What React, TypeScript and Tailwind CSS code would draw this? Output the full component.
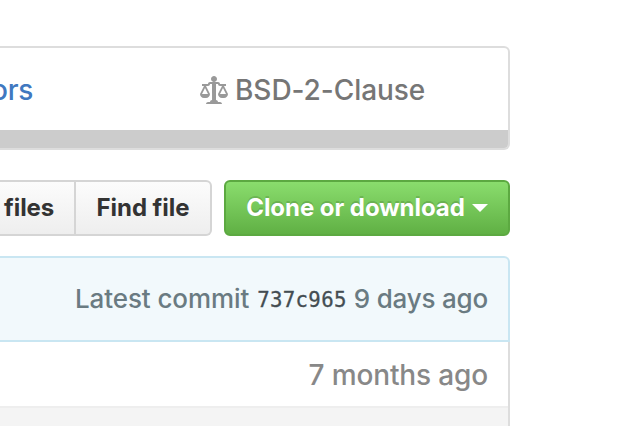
function LawIcon() {
  return (
    <svg viewBox="0 0 14 16" className="h-8 w-7 shrink-0 fill-[#999999]" aria-hidden="true">
      <path
        fillRule="evenodd"
        d="M7 4c-.83 0-1.5-.67-1.5-1.5S6.17 1 7 1s1.5.67 1.5 1.5S7.83 4 7 4zm7 6c0 1.11-.89 2-2 2h-1c-1.11 0-2-.89-2-2l2-4h-1c-.55 0-1-.45-1-1H8v8c.42 0 1 .45 1 1h1c.42 0 1 .45 1 1H3c0-.55.58-1 1-1h1c0-.55.58-1 1-1h.03L6 5H5c0 .55-.45 1-1 1H3l2 4c0 1.11-.89 2-2 2H2c-1.11 0-2-.89-2-2l2-4H1V5h3c0-.55.45-1 1-1h4c.55 0 1 .45 1 1h3v1h-1l2 4zM2.5 7L1 10h3L2.5 7zM13 10l-1.5-3-1.5 3h3z"
      />
    </svg>
  );
}

function Summary() {
  return (
    <section className="flex h-[104px] flex-col overflow-hidden rounded-r-md border-2 border-l-0 border-[#dddddd]">
      <div className="flex h-[82px] items-center pt-[2px] text-[28px]">
        <a className="w-[200px] font-[450] tracking-[-0.2px] text-[#4078c0]">
          <span className="-ml-[9px]">ors</span>
        </a>
        <LawIcon />
        <span className="ml-[7px] whitespace-nowrap font-[450] tracking-[-0.05px] text-[#767676]">BSD-2-Clause</span>
      </div>
      <div className="h-[18px] bg-[#cccccc]" />
    </section>
  );
}

function Actions() {
  return (
    <div className="mt-[30px] flex h-14 text-[24px] font-bold tracking-[-0.05px] text-[#333333]">
      <button className="w-[76px] border-2 border-l-0 border-[#d5d5d5] bg-linear-to-b from-[#fcfcfc] to-[#eeeeee] pl-1 text-left">
        files
      </button>
      <button className="w-[136px] rounded-r-md border-2 border-l-0 border-[#d5d5d5] bg-linear-to-b from-[#fcfcfc] to-[#eeeeee] whitespace-nowrap">
        Find file
      </button>
      <button className="ml-3 flex w-[286px] items-center rounded-md border-2 border-[#5ca941] bg-linear-to-b from-[#8add6d] to-[#60b044] pl-5 whitespace-nowrap text-white [text-shadow:0_-2px_0_rgba(0,0,0,0.15)]">
        <span className="w-[219px]">Clone or download</span>
        <span className="ml-[7px] h-0 w-0 border-x-8 border-t-8 border-x-transparent border-t-white" />
      </button>
    </div>
  );
}

function Commits() {
  return (
    <section className="mt-5 h-[170px]">
      <div className="flex h-[86px] items-center justify-end rounded-tr-md border-2 border-l-0 border-[#c9e6f2] bg-[#f2f9fc] pr-5 pb-[2px] text-[26px] font-[450] whitespace-nowrap text-[#6a7b82]">
        <span className="tracking-[-0.1px]">Latest commit</span>
        <span className="mt-[6px] mr-[7px] ml-2 font-['DejaVu_Sans_Mono',monospace] text-[20.7px] tracking-[0.35px] text-[#444d52] [-webkit-text-stroke:0.3px_#444d52]">737c965</span>
        <span className="tracking-[-0.2px]">9 days ago</span>
      </div>
      <div className="h-[64px] border-r-2 border-[#dddddd] pr-5 text-right text-[28px] leading-[66px] font-[450] tracking-[-0.15px] text-[#888888]">
        7 months ago
      </div>
      <div className="flex h-5">
        <div className="flex-1 border-t-2 border-[#eeeeee] bg-[#f4f4f4]" />
        <div className="w-[2px] bg-[#dddddd]" />
      </div>
    </section>
  );
}

export default function App() {
  return (
    <main className="h-[426px] w-[634px] overflow-hidden bg-white pt-[46px] font-['Inter',sans-serif]">
      <div className="w-[510px]">
        <Summary />
        <Actions />
        <Commits />
      </div>
    </main>
  );
}
